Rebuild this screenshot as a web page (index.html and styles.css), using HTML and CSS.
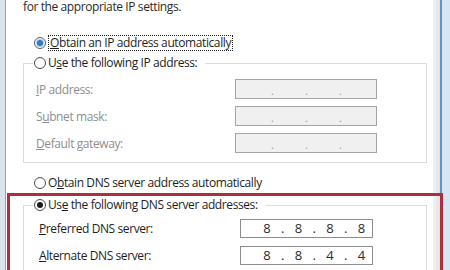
FILE: index.html
```html
<!DOCTYPE html>
<html>
<head>
<meta charset="utf-8">
<link rel="stylesheet" href="styles.css">
</head>
<body>
<div class="window">
  <div class="frame-left"></div>
  <div class="page">
    <p class="intro">for the appropriate IP settings.</p>

    <div class="radio-row first">
      <span class="radio checked blue"></span>
      <span class="rlabel focus"><u>O</u>btain an IP address automatically</span>
    </div>

    <fieldset class="group g1">
      <legend><span class="radio"></span><span class="rlabel">U<u>s</u>e the following IP address:</span></legend>
      <div class="field-row">
        <span class="flabel dis"><u>I</u>P address:</span>
        <span class="ipbox dis"><span class="seg"></span><span class="dot">.</span><span class="seg"></span><span class="dot">.</span><span class="seg"></span><span class="dot">.</span><span class="seg"></span></span>
      </div>
      <div class="field-row">
        <span class="flabel dis">S<u>u</u>bnet mask:</span>
        <span class="ipbox dis"><span class="seg"></span><span class="dot">.</span><span class="seg"></span><span class="dot">.</span><span class="seg"></span><span class="dot">.</span><span class="seg"></span></span>
      </div>
      <div class="field-row">
        <span class="flabel dis"><u>D</u>efault gateway:</span>
        <span class="ipbox dis"><span class="seg"></span><span class="dot">.</span><span class="seg"></span><span class="dot">.</span><span class="seg"></span><span class="dot">.</span><span class="seg"></span></span>
      </div>
    </fieldset>

    <div class="radio-row dns-auto">
      <span class="radio"></span>
      <span class="rlabel">O<u>b</u>tain DNS server address automatically</span>
    </div>

    <fieldset class="group g2">
      <legend><span class="radio checked"></span><span class="rlabel">Us<u>e</u> the following DNS server addresses:</span></legend>
      <div class="field-row dns">
        <span class="flabel"><u>P</u>referred DNS server:</span>
        <span class="ipbox val"><span class="seg">8</span><span class="dot">.</span><span class="seg">8</span><span class="dot">.</span><span class="seg">8</span><span class="dot">.</span><span class="seg">8</span></span>
      </div>
      <div class="field-row dns">
        <span class="flabel"><u>A</u>lternate DNS server:</span>
        <span class="ipbox val"><span class="seg">8</span><span class="dot">.</span><span class="seg">8</span><span class="dot">.</span><span class="seg">4</span><span class="dot">.</span><span class="seg">4</span></span>
      </div>
    </fieldset>

    <div class="highlight"></div>
  </div>
  <div class="frame-right"><div class="fr-gray"></div><div class="fr-line"></div><div class="fr-blue"></div></div>
</div>
</body>
</html>
```

FILE: styles.css
```css
* { box-sizing: border-box; }
html, body { margin: 0; padding: 0; background: #ffffff; }
body {
  font-family: "Open Sans", "Noto Sans", "DejaVu Sans", sans-serif;
  font-size: 12px;
  letter-spacing: -0.4px;
  color: #1e1e1e;
}
u { text-decoration: underline; text-underline-offset: 1px; }

.window {
  width: 450px;
  height: 270px;
  display: flex;
  overflow: hidden;
}
.frame-left {
  width: 6px;
  flex: none;
  background: #dbe3ec;
  border-right: 1px solid #8fa5bd;
}
.frame-right {
  width: 17px;
  flex: none;
  display: flex;
}
.fr-gray { width: 7px; background: linear-gradient(to right, #f2f2f4, #e3e3e8); }
.fr-line { width: 2px; background: #5f95c8; }
.fr-blue { flex: 1; background: #d7e6f4; }

.page {
  position: relative;
  width: 427px;
  flex: none;
  background: #fff;
}

.intro {
  margin: 0 0 0 17px;
  height: 15px;
  line-height: 14px;
  color: #2a2a2a;
}

.radio-row {
  display: flex;
  align-items: center;
  height: 16px;
  gap: 2px;
}
.radio-row.first { margin: 20px 0 0 28px; }
.radio-row.dns-auto { margin: 12px 0 0 28px; }

.radio {
  width: 12px;
  height: 12px;
  border-radius: 50%;
  border: 1px solid #4a4a4a;
  background: #fff;
  flex: none;
  display: inline-flex;
  align-items: center;
  justify-content: center;
}
.radio.checked::after {
  content: "";
  width: 6px;
  height: 6px;
  border-radius: 50%;
  background: #1b1b1b;
}
.radio.blue { border-color: #5a5a5a; }
.radio.blue::after {
  background: #2e7cc4;
  box-shadow: 0 0 0 1px #a9cdee;
}

.rlabel { line-height: 14px; white-space: nowrap; }
.rlabel.focus {
  border: 1px dotted #222;
  padding: 0 1px;
  line-height: 14px;
}

.group {
  margin: 4px 0 0 17px;
  width: 404px;
  padding: 0;
  border: 1px solid #dcdcdc;
  min-inline-size: 0;
}
.group legend {
  display: flex;
  align-items: center;
  gap: 2px;
  height: 16px;
  margin-left: 9px;
  padding: 0 8px 0 1px;
}

.g1 { height: 108px; padding-top: 8px; }
.g2 { margin-top: 6px; height: 120px; padding-top: 5px; }

.field-row {
  display: flex;
  align-items: center;
  height: 20px;
  margin-bottom: 7px;
}
.flabel {
  width: 211px;
  padding-left: 12px;
  flex: none;
  white-space: nowrap;
}
.flabel.dis { color: #8e8e8e; }
.dns .flabel { width: 216px; padding-left: 15px; }

.ipbox {
  display: flex;
  height: 20px;
  border: 1px solid #a5a5a5;
  background: #f0f0f0;
  letter-spacing: 0;
}
.ipbox.dis {
  width: 142px;
  padding-left: 10px;
  color: #9a9a9a;
}
.ipbox.dis .seg { width: 19px; }
.ipbox.dis .dot { width: 15px; text-align: center; line-height: 22px; font-size: 11px; }

.ipbox.val {
  width: 133px;
  height: 19px;
  padding-left: 18px;
  background: #fff;
  border-color: #8d8d8d;
  color: #2b2b2b;
  font-size: 13px;
  line-height: 17px;
}
.ipbox.val .seg { width: 16px; text-align: center; }
.ipbox.val .dot { width: 15.5px; text-align: center; }

.highlight {
  position: absolute;
  left: 1px;
  top: 193px;
  width: 436px;
  height: 120px;
  border: 3px solid #ad2f3b;
  pointer-events: none;
}
```
